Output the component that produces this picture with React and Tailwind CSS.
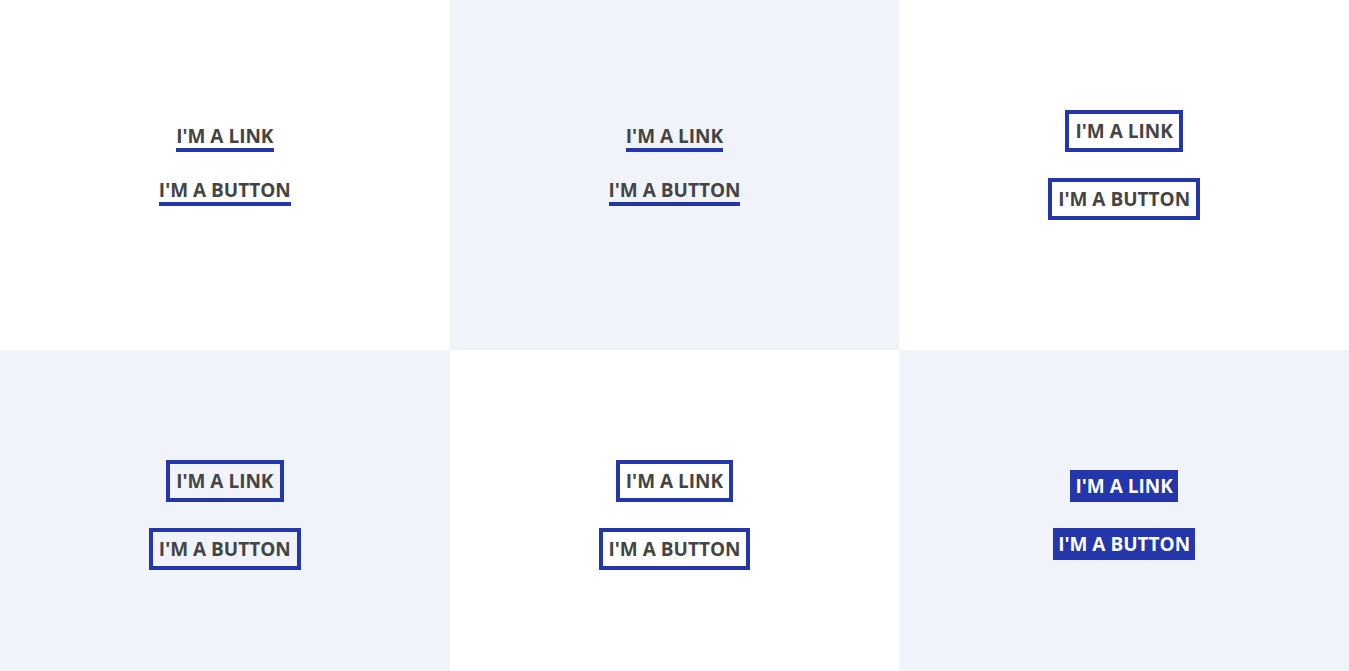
import React from "react";

const panels = [
    { bg: "bg-white", kind: "underline" },
    { bg: "bg-[#f0f3fa]", kind: "underline" },
    { bg: "bg-white", kind: "outline" },
    { bg: "bg-[#f0f3fa]", kind: "outline" },
    { bg: "bg-white", kind: "outline" },
    { bg: "bg-[#f0f3fa]", kind: "filled" },
];

// estilos por tipo de panel
const styles = {
    underline: "border-b-4 border-[#2336aa] text-[#444]",
    outline: "border-4 border-[#2336aa] px-[6px] py-[5px] text-[#444]",
    filled: "bg-[#2336aa] px-[5px] py-[4px] text-white",
};

function Panel({ bg, kind }) {
    const cls = `inline-block text-[19px] leading-6 font-bold uppercase ${styles[kind]}`;
    return (
        <div className={`${bg} h-[350px] flex flex-col items-center justify-center gap-[26px] pb-5`}>
            <a href="#" className={cls}>I'm a link</a>
            <button type="button" className={cls}>I'm a button</button>
        </div>
    );
}

export default function App() {
    return (
        <div className="grid grid-cols-3 font-['Open_Sans',sans-serif]">
            {panels.map((p, i) => (
                <Panel key={i} bg={p.bg} kind={p.kind} />
            ))}
        </div>
    );
}
